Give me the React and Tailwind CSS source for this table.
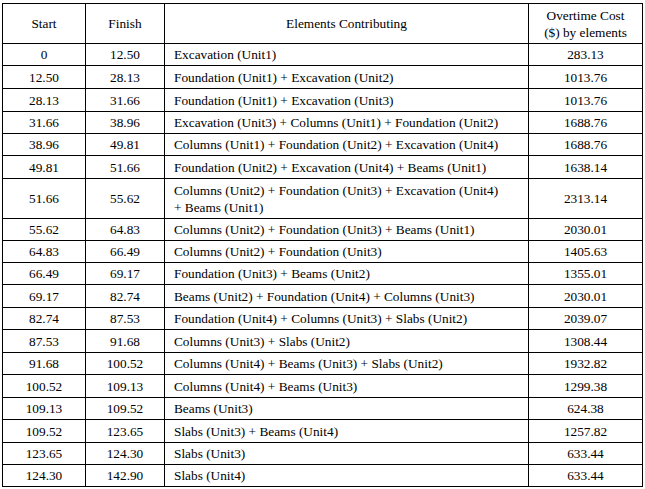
import React from "react";

const rows = [
  ["0", "12.50", "Excavation (Unit1)", "283.13", "h-[22px]"],
  ["12.50", "28.13", "Foundation (Unit1) + Excavation (Unit2)", "1013.76", "h-[23px]"],
  ["28.13", "31.66", "Foundation (Unit1) + Excavation (Unit3)", "1013.76", "h-[23px]"],
  ["31.66", "38.96", "Excavation (Unit3) + Columns (Unit1) + Foundation (Unit2)", "1688.76", "h-[22px]"],
  ["38.96", "49.81", "Columns (Unit1) + Foundation (Unit2) + Excavation (Unit4)", "1688.76", "h-[22px]"],
  ["49.81", "51.66", "Foundation (Unit2) + Excavation (Unit4) + Beams (Unit1)", "1638.14", "h-[23px]"],
  ["51.66", "55.62", null, "2313.14", "h-[40px]"],
  ["55.62", "64.83", "Columns (Unit2) + Foundation (Unit3) + Beams (Unit1)", "2030.01", "h-[22px]"],
  ["64.83", "66.49", "Columns (Unit2) + Foundation (Unit3)", "1405.63", "h-[22px]"],
  ["66.49", "69.17", "Foundation (Unit3) + Beams (Unit2)", "1355.01", "h-[22px]"],
  ["69.17", "82.74", "Beams (Unit2) + Foundation (Unit4) + Columns (Unit3)", "2030.01", "h-[23px]"],
  ["82.74", "87.53", "Foundation (Unit4) + Columns (Unit3) + Slabs (Unit2)", "2039.07", "h-[22px]"],
  ["87.53", "91.68", "Columns (Unit3) + Slabs (Unit2)", "1308.44", "h-[23px]"],
  ["91.68", "100.52", "Columns (Unit4) + Beams (Unit3) + Slabs (Unit2)", "1932.82", "h-[22px]"],
  ["100.52", "109.13", "Columns (Unit4) + Beams (Unit3)", "1299.38", "h-[23px]"],
  ["109.13", "109.52", "Beams (Unit3)", "624.38", "h-[22px]"],
  ["109.52", "123.65", "Slabs (Unit3) + Beams (Unit4)", "1257.82", "h-[23px]"],
  ["123.65", "124.30", "Slabs (Unit3)", "633.44", "h-[22px]"],
  ["124.30", "142.90", "Slabs (Unit4)", "633.44", "h-[22px]"],
];

const cell = "border-r border-b border-black flex items-center";

export default function App() {
  return (
    <div className="w-[645px] h-[489px] bg-white pt-[3px] pl-[2px] font-['Liberation_Serif',serif] text-[13.3px] leading-[17px] text-black">
      <div className="w-[641px] border-l border-t border-black">
        <div className="grid grid-cols-[83px_79px_364px_114px] h-[40px]">
          <div className={cell + " justify-center"}>Start</div>
          <div className={cell + " justify-center"}>Finish</div>
          <div className={cell + " justify-center"}>Elements Contributing</div>
          <div className={cell + " justify-center text-center"}>
            Overtime Cost
            <br />
            ($) by elements
          </div>
        </div>
        {rows.map(([s, f, e, c, h], i) => (
          <div key={i} className={"grid grid-cols-[83px_79px_364px_114px] " + h}>
            <div className={cell + " justify-center"}>{s}</div>
            <div className={cell + " justify-center"}>{f}</div>
            <div className={cell + " justify-start pl-[9px] pr-[4px]"}>
              {e === null ? (
                <span>
                  Columns (Unit2) + Foundation (Unit3) + Excavation (Unit4)
                  <br />+ Beams (Unit1)
                </span>
              ) : (
                e
              )}
            </div>
            <div className={cell + " justify-center"}>{c}</div>
          </div>
        ))}
      </div>
    </div>
  );
}
